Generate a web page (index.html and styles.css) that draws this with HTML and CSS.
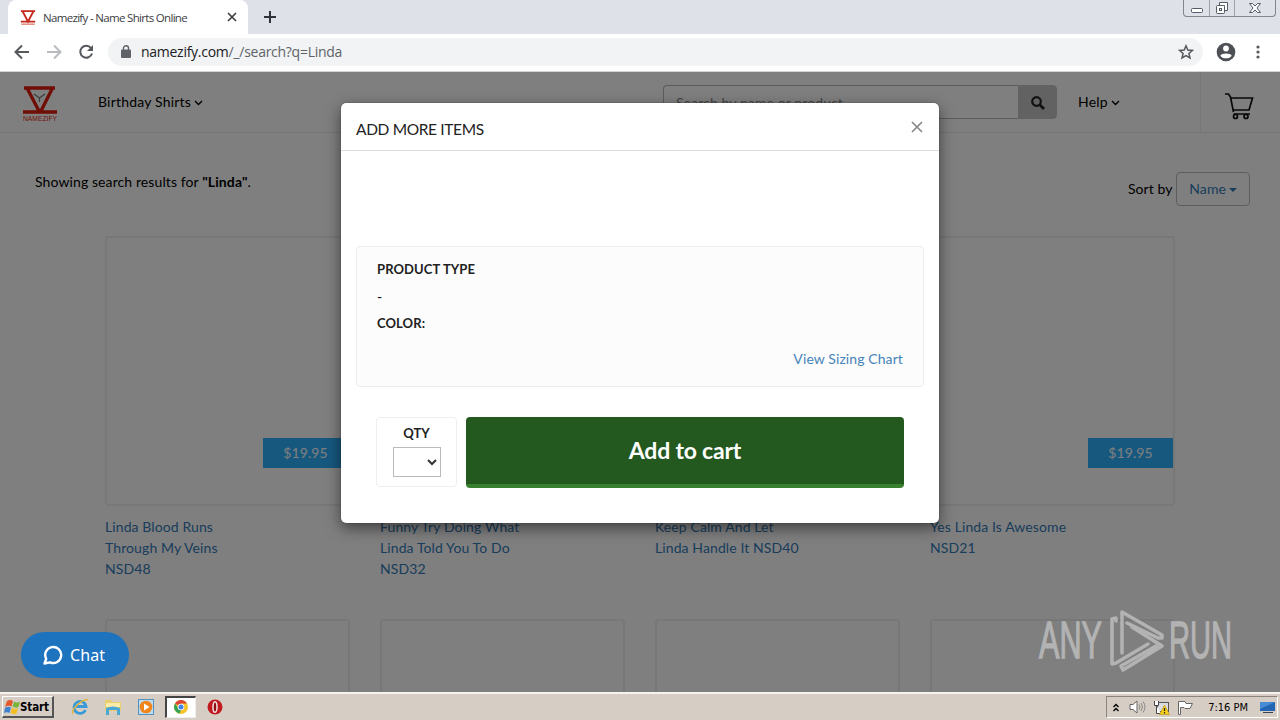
FILE: index.html
```
<!DOCTYPE html>
<html lang="en">
<head>
    <meta charset="utf-8">
    <title>Namezify - Name Shirts Online</title>
    <link rel="stylesheet" href="styles.css">
</head>
<body>
    <div class="tabstrip">
        <div class="tab">
            <svg class="favicon" width="16" height="16" viewBox="0 0 38 38">
                <path d="M2 5H36M2 30H36M6 5L19 30L32 5" fill="none" stroke="#c5281c" stroke-width="4.500"/>
                <path d="M3 36H35" stroke="#d9796f" stroke-width="3"/>
            </svg>
            <span class="tab-title">Namezify - Name Shirts Online</span>
            <svg width="10" height="10" viewBox="0 0 10 10"><path d="M1 1L9 9M9 1L1 9" stroke="#3c4043" stroke-width="1.7"/></svg>
        </div>
        <svg class="new-tab" width="12" height="12" viewBox="0 0 12 12"><path d="M6 0V12M0 6H12" stroke="#303338" stroke-width="2"/></svg>
        <div class="window-buttons">
            <span><svg width="14" height="14" viewBox="0 0 14 14"><rect x="1.5" y="7.5" width="11" height="4" rx="1" fill="#fff" stroke="#555b66"/></svg></span>
            <span><svg width="14" height="14" viewBox="0 0 14 14"><path d="M4.500 1.500H12.500V9.500H9.500V4.500H4.500Z" fill="#fff" stroke="#555b66"/><rect x="1.500" y="4.500" width="8" height="8" rx="1" fill="#fff" stroke="#555b66"/><rect x="4.500" y="7.500" width="2" height="2" fill="none" stroke="#555b66"/></svg></span>
            <span><svg width="14" height="14" viewBox="0 0 14 14"><path d="M1.500 2.500H4.500L7 5L9.500 2.500H12.500L9 7L12.500 11.500H9.500L7 9L4.500 11.500H1.500L5 7Z" fill="#fff" stroke="#555b66"/></svg></span>
        </div>
    </div>

    <div class="toolbar">
        <svg width="16" height="16" viewBox="0 0 16 16"><path d="M15 8H2M8 1.500L1.500 8L8 14.500" fill="none" stroke="#55585c" stroke-width="2"/></svg>
        <svg width="16" height="16" viewBox="0 0 16 16"><path d="M1 8H14M8 1.500L14.500 8L8 14.500" fill="none" stroke="#b9bbbe" stroke-width="2"/></svg>
        <svg width="16" height="16" viewBox="0 0 16 16"><path d="M13 4A6 6 0 1 0 14 9.500" fill="none" stroke="#55585c" stroke-width="2"/><path d="M15 1V7H9Z" fill="#55585c"/></svg>
        <div class="address">
            <svg width="10" height="13" viewBox="0 0 10 13"><rect y="4.500" width="10" height="8.500" rx="1" fill="#5f6368"/><path d="M2.500 5V3A2.500 2.200 0 0 1 7.500 3V5" fill="none" stroke="#5f6368" stroke-width="1.400"/></svg>
            <span class="url">namezify.com<span>/_/search?q=Linda</span></span>
            <svg width="16" height="16" viewBox="0 0 16 16"><path d="M8 1.800L9.800 6L14.400 6.400L10.900 9.400L12 13.900L8 11.500L4 13.900L5.100 9.400L1.600 6.400L6.200 6Z" fill="none" stroke="#55585c" stroke-width="1.500"/></svg>
        </div>
        <svg class="profile" width="20" height="20" viewBox="0 0 20 20"><circle cx="10" cy="10" r="9.300" fill="#4d5054"/><circle cx="10" cy="6.500" r="2.900" fill="#fff"/><path d="M4.300 13.800C5.500 10.800 14.500 10.800 15.700 13.800C14 17.200 6 17.200 4.300 13.800Z" fill="#fff"/></svg>
        <svg width="4" height="14" viewBox="0 0 4 14" fill="#55585c"><circle cx="2" cy="2" r="1.600"/><circle cx="2" cy="7" r="1.600"/><circle cx="2" cy="12" r="1.600"/></svg>
    </div>

    <div class="page">
        <header class="site-header">
            <svg class="logo" width="36" height="40" viewBox="0 0 36 40">
                <path d="M2 3H33M1 27H35M5 3L17.500 27M30.500 3L18.500 27" fill="none" stroke="#e11c0c" stroke-width="3.400"/>
                <path d="M12 9L17.500 13L23 9M17.500 13V17" fill="none" stroke="#777" stroke-width="1.300"/>
                <text x="1" y="35.500" textLength="34" lengthAdjust="spacingAndGlyphs">NAMEZIFY</text>
            </svg>
            <a class="nav-link birthday">Birthday Shirts <svg width="9" height="6" viewBox="0 0 9 6"><path d="M1 1L4.500 4.500L8 1"/></svg></a>
            <div class="search">
                <input type="text" placeholder="Search by name or product...">
                <button><svg width="14" height="14" viewBox="0 0 14 14"><circle cx="5.500" cy="5.500" r="4.300" fill="none" stroke="#222" stroke-width="2.200"/><path d="M8.500 8.500L13 13" stroke="#222" stroke-width="2.800"/></svg></button>
            </div>
            <a class="nav-link help">Help <svg width="9" height="6" viewBox="0 0 9 6"><path d="M1 1L4.500 4.500L8 1"/></svg></a>
            <div class="cart">
                <svg width="30" height="28" viewBox="0 0 30 28" fill="none" stroke="#111" stroke-width="1.700">
                    <path d="M0 2H3.500L5.500 5L8.500 20M5.500 6H27.500L24 18H8.500M8.500 22H25"/>
                    <circle cx="10.500" cy="24.500" r="2"/><circle cx="21" cy="24.500" r="2"/>
                </svg>
            </div>
        </header>

        <div class="results-bar">
            <span>Showing search results for <b>"Linda"</b>.</span>
            <div class="sort">Sort by <button>Name <i class="caret"></i></button></div>
        </div>

        <div class="products">
            <div class="product">
                <div class="thumb"><span class="price">$19.95</span></div>
                <a>Linda Blood Runs<br>Through My Veins<br>NSD48</a>
            </div>
            <div class="product">
                <div class="thumb"><span class="price">$19.95</span></div>
                <a>Funny Try Doing What<br>Linda Told You To Do<br>NSD32</a>
            </div>
            <div class="product">
                <div class="thumb"><span class="price">$19.95</span></div>
                <a>Keep Calm And Let<br>Linda Handle It NSD40</a>
            </div>
            <div class="product">
                <div class="thumb"><span class="price">$19.95</span></div>
                <a>Yes Linda Is Awesome<br>NSD21</a>
            </div>
            <div class="product"><div class="thumb"></div></div>
            <div class="product"><div class="thumb"></div></div>
            <div class="product"><div class="thumb"></div></div>
            <div class="product"><div class="thumb"></div></div>
        </div>

        <div class="backdrop">
            <div class="modal">
                <div class="modal-header">
                    <h4>ADD MORE ITEMS</h4>
                    <svg width="12" height="12" viewBox="0 0 12 12"><path d="M1 1L11 11M11 1L1 11" stroke="#888" stroke-width="1.700"/></svg>
                </div>
                <div class="modal-body">
                    <div class="options">
                        <strong>PRODUCT TYPE</strong>
                        <span>-</span>
                        <strong>COLOR:</strong>
                        <a>View Sizing Chart</a>
                    </div>
                    <div class="buy-row">
                        <div class="qty">
                            <strong>QTY</strong>
                            <div class="select"><svg width="10" height="7" viewBox="0 0 10 7"><path d="M1 1L5 5L9 1" fill="none" stroke="#333" stroke-width="2"/></svg></div>
                        </div>
                        <button class="add-to-cart">Add to cart</button>
                    </div>
                </div>
            </div>
        </div>

        <div class="chat">
            <svg width="20" height="20" viewBox="0 0 20 20"><path d="M1.500 18.500L3.200 13.800A8 8 0 1 1 7 17.300Z" fill="none" stroke="#fff" stroke-width="2.400" stroke-linejoin="round"/></svg>
            Chat
        </div>

        <div class="watermark">
            <span class="word any">ANY</span>
            <svg width="56" height="62" viewBox="0 0 56 62" fill="none" stroke="#bdbdbd" stroke-width="3.500" stroke-linejoin="round" stroke-linecap="round">
                <path d="M7 11V8L3 9V54L7 53L39 34"/>
                <path d="M13 43V2L53 25V28L49 28L18 13"/>
                <path d="M23 17L53 36L14 60L12 56L47 36"/>
            </svg>
            <span class="word run">RUN</span>
        </div>
    </div>

    <div class="taskbar">
        <div class="start">
            <svg width="16" height="16" viewBox="0 0 16 16">
                <path d="M3 2Q6 0 9 2L7.500 7.500Q4.500 6 1 8Z" fill="#e2592b"/>
                <path d="M10 2.500Q13 4.500 16 2.500L14.500 8Q11.500 9.500 8.500 7.500Z" fill="#79b43c"/>
                <path d="M1 9Q4 7 7 8.500L5.500 14Q3 12.500 0 14Z" fill="#3f83d0"/>
                <path d="M8 8.500Q11 11 14 9L12.500 14.500Q9.500 16 6.500 14Z" fill="#f3bd26"/>
            </svg>
            Start
        </div>
        <svg class="task-icon" width="18" height="18" viewBox="0 0 18 18"><path d="M14.500 12A6 6 0 1 1 15 8.500H5" fill="none" stroke="#3a9ad9" stroke-width="2.800"/><path d="M2 16C-1 12 12 0 17 2" fill="none" stroke="#e2b53e" stroke-width="1.500"/></svg>
        <svg class="task-icon" width="18" height="18" viewBox="0 0 18 18"><path d="M1 2H7L8 4H17V13H1Z" fill="#e9cf6d"/><path d="M2 5H16V9H2Z" fill="#f9eca9"/><path d="M2 17V10Q9 7 16 10V17H13V12H5V17Z" fill="#4ba7d6"/></svg>
        <svg class="task-icon media" width="18" height="18" viewBox="0 0 18 18"><rect x="1.500" y="1.500" width="15" height="15" fill="#c1dbee" stroke="#5291c3"/><circle cx="9" cy="9" r="6.300" fill="#ef851b"/><path d="M7 5.500L12.500 9L7 12.500Z" fill="#fff"/></svg>
        <div class="task-active">
            <svg width="14" height="14" viewBox="0 0 14 14"><circle cx="7" cy="7" r="7" fill="#f8c42c"/><path d="M7 7L1 3.500A7 7 0 0 1 13 3.500H7Z" fill="#dc4435"/><path d="M1 3.500L5 9L7 10L5.500 13.800A7 7 0 0 1 1 3.500Z" fill="#35a354"/><circle cx="7" cy="7" r="3.300" fill="#fff"/><circle cx="7" cy="7" r="2.500" fill="#4384ec"/></svg>
        </div>
        <svg class="opera" width="16" height="16" viewBox="0 0 16 16"><circle cx="8" cy="8" r="7.500" fill="#c01a1f"/><ellipse cx="8" cy="8" rx="2" ry="5.300" fill="#8d0f13" stroke="#f5e4e4" stroke-width="1.500"/></svg>
        <div class="tray">
            <svg width="6" height="9" viewBox="0 0 6 9"><path d="M.5 4L3 1.500L5.500 4M.5 8L3 5.500L5.500 8" fill="none" stroke="#000" stroke-width="1.400"/></svg>
            <svg class="speaker" width="17" height="14" viewBox="0 0 17 14"><path d="M1 4.500H4L8 1V13L4 9.500H1Z" fill="#fff" stroke="#666"/><path d="M10 4.500Q12 7 10 9.500M12 3Q15 7 12 11M14 1.500Q18 7 14 12.500" fill="none" stroke="#888"/></svg>
            <svg class="network" width="17" height="15" viewBox="0 0 17 15"><rect x="4.500" y="2.500" width="11" height="9" fill="#d9dde2" stroke="#555"/><path d="M1.500 1V5.500H5.500V1M3.500 5.500V13.500H8" fill="#fff" stroke="#444"/><path d="M11.500 5L16.500 14.500H6.500Z" fill="#f8cf1c" stroke="#b78f0c" stroke-width=".6"/><path d="M11.500 8V11M11.500 12V13.500" stroke="#222" stroke-width="1.200"/></svg>
            <svg class="flag" width="17" height="15" viewBox="0 0 17 15"><path d="M1.500 14.500V1.500H8L9 3.500H15.500L13 8.500H8L7 7.500H3.500V14.500Z" fill="#fff" stroke="#666"/></svg>
            <span class="clock">7:16 PM</span>
            <svg class="desktop" width="15" height="13" viewBox="0 0 15 13"><path d="M0 1H15V10H0Z" fill="#2265b5"/><path d="M0 1H15L0 8Z" fill="#478bd4"/><path d="M3 11H13V12H3Z" fill="#345"/></svg>
        </div>
    </div>
</body>
</html>
```
FILE: styles.css
```
* {
    box-sizing: border-box;
}
body {
    margin: 0;
    height: 720px;
    display: flex;
    flex-direction: column;
    overflow: hidden;
    background: #fff;
    font-family: Lato, sans-serif;
    font-size: 14px;
    color: #000;
}
svg {
    flex: none;
}
button,
input {
    font-family: inherit;
    font-size: inherit;
    letter-spacing: inherit;
}

/* browser */
.tabstrip {
    height: 34px;
    flex: none;
    display: flex;
    align-items: flex-start;
    background: #dee1e8;
    padding-left: 8px;
}
.tab {
    width: 240px;
    height: 34px;
    display: flex;
    align-items: center;
    padding: 0 11px 0 12px;
    background: #fff;
    border-radius: 8px 8px 0 0;
}
.tab-title {
    flex: 1;
    margin-left: 7px;
    font: 11.5px "Open Sans", sans-serif;
    letter-spacing: -0.68px;
    color: #3c4043;
}
.new-tab {
    margin: 11px 0 0 16px;
}
.window-buttons {
    display: flex;
    margin: 0 4px 0 auto;
    height: 17px;
    border: 1px solid #7f8591;
    border-top: none;
    border-radius: 0 0 4px 4px;
}
.window-buttons span {
    width: 25px;
    padding-top: 1px;
    text-align: center;
}
.window-buttons span + span {
    border-left: 1px solid #9da2ac;
}
.window-buttons span:last-child {
    width: 41px;
}
.toolbar {
    height: 38px;
    flex: none;
    display: flex;
    align-items: center;
    gap: 16px;
    padding: 0 20px 2px 14px;
    border-bottom: 1px solid #d5d5d5;
}
.address {
    flex: 1;
    display: flex;
    align-items: center;
    height: 28px;
    margin-left: -2px;
    padding: 0 9px 0 13px;
    border-radius: 14px;
    background: #f1f3f4;
}
.url {
    flex: 1;
    margin-left: 10px;
    font: 14px "Open Sans", sans-serif;
    letter-spacing: -0.27px;
    color: #202124;
}
.url span {
    color: #5f6368;
}
.profile {
    margin: 0 4px 0 -3px;
}

/* page */
.page {
    position: relative;
    flex: 1;
    overflow: hidden;
    letter-spacing: 0.1px;
}
.site-header {
    height: 61px;
    display: flex;
    align-items: center;
    padding-left: 22px;
    border-bottom: 1px solid #eaeaea;
}
.logo {
    margin-top: 5px;
}
.logo text {
    font: 7.5px "Liberation Sans", sans-serif;
    fill: #e11c0c;
}
.nav-link {
    margin-bottom: 2px;
    letter-spacing: 0.2px;
}
.nav-link svg {
    vertical-align: 1px;
    margin-left: -1px;
    fill: none;
    stroke: #000;
    stroke-width: 1.4;
}
.birthday {
    width: 565px;
    margin-left: 40px;
}
.search {
    display: flex;
    width: 394px;
    height: 34px;
}
.search input {
    flex: 1;
    padding: 0 12px;
    border: 1px solid #b8b8b8;
    border-right: none;
    border-radius: 4px 0 0 4px;
    background: #fff;
}
.search input::placeholder {
    color: #888;
}
.search button {
    width: 39px;
    padding: 4px 0 0;
    border: 1px solid #c4c4c4;
    border-radius: 0 4px 4px 0;
    background: #c4c4c4;
}
.help {
    margin-left: 21px;
}
.cart {
    width: 80px;
    height: 60px;
    margin-left: auto;
    padding: 20px 0 0 24px;
    border-left: 1px solid #eee;
}
.results-bar {
    display: flex;
    justify-content: space-between;
    height: 103px;
    padding: 39px 30px 0 35px;
}
.results-bar > span {
    padding-top: 1px;
}
.sort button {
    height: 34px;
    width: 74px;
    padding: 0 0 2px;
    border: 1px solid #bbb;
    border-radius: 4px;
    background: #fff;
    color: #337ab7;
}
.caret {
    display: inline-block;
    vertical-align: 2px;
    margin-left: -1px;
    border: 4px solid transparent;
    border-top-color: #337ab7;
    border-bottom: none;
}
.products {
    display: grid;
    grid-template-columns: repeat(4, 245px);
    column-gap: 30px;
    padding-left: 105px;
}
.product {
    height: 383px;
    color: #337ab7;
    line-height: 21px;
}
.thumb {
    display: flex;
    align-items: flex-end;
    justify-content: flex-end;
    height: 270px;
    margin-bottom: 10px;
    padding-bottom: 36px;
    border: 2px solid #f0f0f0;
    border-radius: 3px;
}
.price {
    width: 85px;
    height: 30px;
    line-height: 30px;
    text-align: center;
    background: #2eb0fe;
    color: #fff;
}

/* add to cart dialog */
.backdrop {
    position: absolute;
    inset: 0;
    padding-top: 31px;
    background: rgba(0, 0, 0, 0.5);
}
.modal {
    width: 598px;
    height: 420px;
    margin: 0 auto;
    border-radius: 5px;
    background: #fff;
    box-shadow: 0 5px 15px rgba(0, 0, 0, 0.5), 0 0 1px #222;
}
.modal-header {
    display: flex;
    align-items: center;
    justify-content: space-between;
    height: 48px;
    padding: 0 16px 0 15px;
    border-bottom: 1px solid #ddd;
}
.modal-header h4 {
    margin: 4px 0 0;
    font-size: 15.5px;
    font-weight: normal;
    letter-spacing: -0.35px;
    color: #222;
}
.modal-body {
    padding: 95px 15px 0;
}
.options {
    display: flex;
    flex-direction: column;
    height: 141px;
    padding: 9px 20px;
    border: 1px solid #eee;
    border-radius: 4px;
    background: #fcfcfc;
    line-height: 27px;
}
.options strong,
.qty strong {
    font-size: 13px;
    letter-spacing: 0.1px;
    color: #222;
}
.options a {
    align-self: flex-end;
    margin-top: 8px;
    color: #4783b8;
}
.buy-row {
    display: flex;
    gap: 9px;
    margin: 30px 20px 0;
}
.qty {
    width: 81px;
    height: 70px;
    padding-top: 6px;
    border: 1px solid #eee;
    border-radius: 4px;
    text-align: center;
}
.select {
    display: flex;
    align-items: center;
    justify-content: flex-end;
    width: 48px;
    height: 30px;
    margin: 6px auto 0;
    padding-right: 3px;
    border: 1px solid #bbb;
}
.add-to-cart {
    flex: 1;
    height: 71px;
    padding-bottom: 3px;
    border: none;
    border-bottom: 4px solid #38802f;
    border-radius: 4px;
    background: #23581f;
    color: #fff;
    font-size: 23px;
    font-weight: bold;
    letter-spacing: -0.2px;
}

/* things floating over the page */
.chat {
    position: absolute;
    left: 21px;
    bottom: 14px;
    width: 108px;
    height: 46px;
    display: flex;
    align-items: center;
    gap: 7px;
    padding-left: 22px;
    border-radius: 23px;
    background: #1d73be;
    color: #fff;
    font: 16px "Noto Sans", sans-serif;
}
.watermark {
    position: absolute;
    left: 1039px;
    top: 538px;
    display: flex;
    align-items: center;
    opacity: 0.85;
    color: #bdbdbd;
}
.word {
    width: 70px;
    font: 51px/60px "Liberation Sans", sans-serif;
    letter-spacing: 0;
    -webkit-text-stroke: 1.3px #bdbdbd;
    transform: scaleX(0.57);
    transform-origin: left;
}
.any {
    transform: scaleX(0.6);
}
.run {
    margin-left: 4px;
}

/* taskbar */
.taskbar {
    display: flex;
    align-items: center;
    height: 28px;
    flex: none;
    padding: 0 2px;
    border-top: 2px solid #f6f4ef;
    background: #d6cec5;
    font-family: "DejaVu Sans Condensed", "DejaVu Sans", sans-serif;
}
.start {
    display: flex;
    align-items: center;
    width: 52px;
    height: 22px;
    margin-right: 17px;
    padding-left: 1px;
    border: 1px solid #fff;
    border-right: 2px solid #555;
    border-bottom: 2px solid #555;
    font-size: 11.5px;
    font-weight: bold;
    letter-spacing: -0.1px;
}
.task-icon {
    margin-right: 15px;
}
.media {
    margin-right: 18px;
}
.task-active {
    width: 31px;
    height: 22px;
    margin: 0 11px 0 -8px;
    padding: 2px 7px;
    border: 1px solid #eee;
    border-top: 2px solid #444;
    border-left: 2px solid #444;
    background: #fff;
    line-height: 0;
}
.tray {
    display: flex;
    align-items: center;
    width: 172px;
    height: 22px;
    margin-left: auto;
    padding: 0 2px 0 6px;
    border: 1px solid #fff;
    border-top-color: #8b857e;
    border-left-color: #8b857e;
}
.speaker {
    margin-left: 10px;
}
.network {
    margin-left: 7px;
}
.flag {
    margin-left: 7px;
}
.clock {
    margin-left: auto;
    font-size: 11px;
}
.desktop {
    margin-left: 12px;
}
```
